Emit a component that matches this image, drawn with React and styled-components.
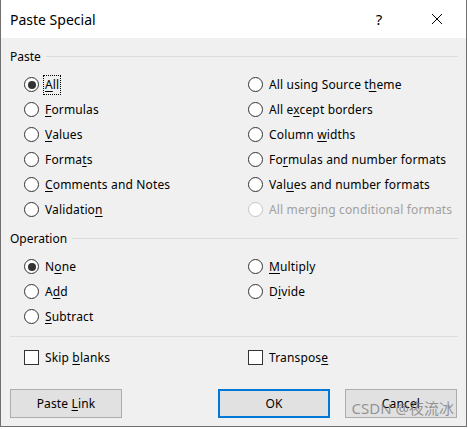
import React from 'react';
import styled, { createGlobalStyle } from 'styled-components';

const GlobalStyle = createGlobalStyle`
  html, body {
    margin: 0;
    padding: 0;
    background: #ffffff;
  }
  body {
    font-family: "Noto Sans", "Open Sans", sans-serif;
    font-size: 12px;
    color: #000;
  }
`;

const Dialog = styled.div`
  position: relative;
  width: 467px;
  height: 427px;
  box-sizing: border-box;
  border: 1px solid #707070;
  border-top: none;
  background: #f0f0f0;
  display: flex;
  flex-direction: column;
`;

const TitleBar = styled.div`
  height: 38px;
  flex: none;
  background: #ffffff;
  display: flex;
  align-items: center;
  padding-left: 9px;
`;

const Title = styled.div`
  flex: 1;
  font-size: 14px;
`;

const HelpMark = styled.div`
  width: 20px;
  font-size: 15px;
  text-align: center;
  margin-right: 42px;
`;

const CloseMark = styled.svg`
  width: 12px;
  height: 12px;
  margin-right: 23px;
`;

const Body = styled.div`
  flex: 1;
  padding: 10px 8px 0 9px;
  display: flex;
  flex-direction: column;
`;

const Legend = styled.div`
  height: 16px;
  display: flex;
  align-items: center;
  gap: 5px;
  margin-top: ${(p) => p.$top || 0}px;

  &::after {
    content: '';
    flex: 1;
    height: 1px;
    background: #dcdcdc;
  }
`;

const OptionGrid = styled.div`
  display: grid;
  grid-template-columns: 224px 1fr;
  grid-auto-rows: 25px;
  padding-left: 14px;
  margin-top: 8px;
`;

const Option = styled.label`
  display: flex;
  align-items: center;
  gap: 6px;
  color: ${(p) => (p.$disabled ? '#a0a0a0' : '#000')};
  white-space: nowrap;
  letter-spacing: 0.15px;
`;

const Radio = styled.span`
  width: 15px;
  height: 15px;
  box-sizing: border-box;
  flex: none;
  border-radius: 50%;
  border: 1px solid ${(p) => (p.$disabled ? '#c4c4c4' : '#333333')};
  background: #ffffff;
  display: flex;
  align-items: center;
  justify-content: center;

  &::after {
    content: '';
    width: 8px;
    height: 8px;
    border-radius: 50%;
    background: #333333;
    display: ${(p) => (p.$checked ? 'block' : 'none')};
  }
`;

const Check = styled.span`
  width: 15px;
  height: 15px;
  box-sizing: border-box;
  flex: none;
  border: 1px solid #333333;
  background: #ffffff;
`;

const Text = styled.span`
  outline: ${(p) => (p.$focus ? '1px dotted #000' : 'none')};
  outline-offset: 1px;
  line-height: 16px;

  u {
    text-decoration-thickness: 1px;
    text-underline-offset: 2px;
  }
`;

const Separator = styled.div`
  height: 1px;
  background: #dcdcdc;
  margin-top: 7px;
`;

const ButtonRow = styled.div`
  display: flex;
  margin-top: 19px;
  padding-right: 1px;
  gap: 15px;
`;

const Spacer = styled.div`
  flex: 1;
`;

const Button = styled.div`
  width: 112px;
  height: 29px;
  box-sizing: border-box;
  border: ${(p) => (p.$default ? '2px solid #0078d7' : '1px solid #adadad')};
  background: #e1e1e1;
  display: flex;
  align-items: center;
  justify-content: center;
  font-size: 12px;
  letter-spacing: 0.15px;

  u {
    text-underline-offset: 2px;
  }
`;

const Watermark = styled.div`
  position: absolute;
  right: 12px;
  bottom: 8px;
  font-size: 15px;
  color: rgba(120, 120, 120, 0.75);
  font-family: "Noto Sans", "Noto Sans CJK SC", sans-serif;
  pointer-events: none;
`;

const Label = ({ pre = '', u = '', post = '' }) => (
  <span>
    {pre}
    {u && <u>{u}</u>}
    {post}
  </span>
);

const pasteOptions = [
  { l: ['', 'A', 'll'], checked: true, focus: true },
  { l: ['All using Source t', 'h', 'eme'] },
  { l: ['', 'F', 'ormulas'] },
  { l: ['All e', 'x', 'cept borders'] },
  { l: ['', 'V', 'alues'] },
  { l: ['Column ', 'w', 'idths'] },
  { l: ['Forma', 't', 's'] },
  { l: ['Fo', 'r', 'mulas and number formats'] },
  { l: ['', 'C', 'omments and Notes'] },
  { l: ['Val', 'u', 'es and number formats'] },
  { l: ['Validatio', 'n', ''] },
  { l: ['All merging conditional formats', '', ''], disabled: true },
];

const operationOptions = [
  { l: ['N', 'o', 'ne'], checked: true },
  { l: ['', 'M', 'ultiply'] },
  { l: ['A', 'd', 'd'] },
  { l: ['D', 'i', 'vide'] },
  { l: ['', 'S', 'ubtract'] },
];

const RadioOption = ({ o }) => (
  <Option $disabled={o.disabled}>
    <Radio $checked={o.checked} $disabled={o.disabled} />
    <Text $focus={o.focus}>
      <Label pre={o.l[0]} u={o.l[1]} post={o.l[2]} />
    </Text>
  </Option>
);

export default function App() {
  return (
    <>
      <GlobalStyle />
      <Dialog>
        <TitleBar>
          <Title>Paste Special</Title>
          <HelpMark>?</HelpMark>
          <CloseMark viewBox="0 0 12 12">
            <path d="M1 1 L11 11 M11 1 L1 11" stroke="#000" strokeWidth="1" fill="none" />
          </CloseMark>
        </TitleBar>
        <Body>
          <Legend>Paste</Legend>
          <OptionGrid>
            {pasteOptions.map((o, i) => (
              <RadioOption key={i} o={o} />
            ))}
          </OptionGrid>
          <Legend $top={8}>Operation</Legend>
          <OptionGrid>
            {operationOptions.map((o, i) => (
              <RadioOption key={i} o={o} />
            ))}
          </OptionGrid>
          <Separator />
          <OptionGrid>
            <Option>
              <Check />
              <Text>
                <Label pre="Skip " u="b" post="lanks" />
              </Text>
            </Option>
            <Option>
              <Check />
              <Text>
                <Label pre="Transpos" u="e" />
              </Text>
            </Option>
          </OptionGrid>
          <ButtonRow>
            <Button>
              <Label pre="Paste " u="L" post="ink" />
            </Button>
            <Spacer />
            <Button $default>OK</Button>
            <Button>Cancel</Button>
          </ButtonRow>
        </Body>
        <Watermark>CSDN @夜流冰</Watermark>
      </Dialog>
    </>
  );
}
